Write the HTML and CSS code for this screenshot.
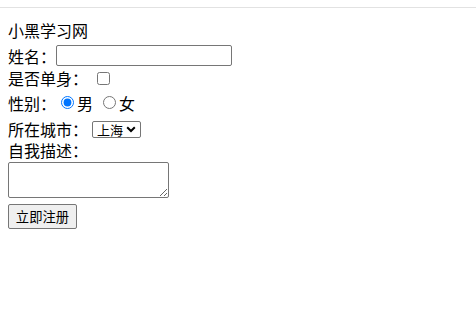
FILE: index.html
```html
<!DOCTYPE html>
<html lang="zh-CN">
<head>
<meta charset="utf-8">
<title>小黑学习网</title>
<link rel="stylesheet" href="styles.css">
</head>
<body>
<div class="topbar"></div>
<form class="form">
  <div class="row title">小黑学习网</div>
  <div class="row row-name">姓名：<input class="text-input" type="text"></div>
  <div class="row row-single">是否单身：<input class="check" type="checkbox"></div>
  <div class="row row-gender">性别：<input class="radio" type="radio" name="g" checked><span class="opt">男</span><input class="radio radio2" type="radio" name="g"><span class="opt">女</span></div>
  <div class="row row-city">所在城市：<select class="city"><option>上海</option></select></div>
  <div class="row row-desc">自我描述：</div>
  <textarea class="desc"></textarea>
  <button class="submit" type="button">立即注册</button>
</form>
</body>
</html>
```

FILE: styles.css
```css
html, body {
  margin: 0;
  padding: 0;
  background: #ffffff;
}
body {
  font-family: "Noto Sans CJK SC", "Noto Sans", sans-serif;
  font-size: 16px;
  color: #000000;
}
.topbar {
  height: 7px;
  border-bottom: 1px solid #e2e2e2;
}
.form {
  display: flex;
  flex-direction: column;
  align-items: flex-start;
  padding: 11px 8px 0 8px;
}
.row {
  display: flex;
  align-items: center;
  white-space: nowrap;
  line-height: 20px;
}
.title { height: 22px; }
.row-name { height: 23px; margin-top: 3px; }
.row-single { height: 22px; }
.row-gender { height: 23px; margin-top: 2px; }
.row-city { height: 22px; margin-top: 4px; line-height: 18px; }
.row-desc { height: 19px; line-height: 18px; }
.text-input {
  box-sizing: border-box;
  width: 176px;
  height: 21px;
  margin: 0;
  padding: 1px 2px;
  border: 1px solid #767676;
  border-radius: 2px;
  font-size: 13.33px;
}
.check {
  width: 13px;
  height: 13px;
  margin: 0 0 0 9px;
}
.radio {
  width: 13px;
  height: 13px;
  margin: 0 3px 0 5px;
}
.radio2 {
  margin-left: 10px;
}
.city {
  -webkit-appearance: none;
  appearance: none;
  box-sizing: border-box;
  height: 17px;
  width: 49px;
  margin: 0 0 0 4px;
  padding: 0 0 0 4px;
  font-family: "Noto Sans CJK SC", sans-serif;
  font-size: 13px;
  line-height: 15px;
  border: 1px solid #767676;
  border-radius: 2px;
  color: #000000;
  background: #ffffff url("data:image/svg+xml,%3Csvg xmlns='http://www.w3.org/2000/svg' width='10' height='7' viewBox='0 0 10 7'%3E%3Cpath d='M1.2 1.3 L5 5 L8.8 1.3' fill='none' stroke='%23000' stroke-width='2'/%3E%3C/svg%3E") no-repeat right 4px center;
}
.desc {
  box-sizing: border-box;
  width: 161px;
  height: 36px;
  margin: 3px 0 0 0;
  border: 1px solid #767676;
  border-radius: 2px;
  padding: 2px;
}
.submit {
  box-sizing: border-box;
  width: 69px;
  height: 25px;
  margin-top: 6px;
  padding: 1px 6px;
  font-family: "Noto Sans CJK SC", sans-serif;
  font-size: 13.33px;
  color: #000000;
  background: #efefef;
  border: 1px solid #767676;
  border-radius: 2px;
}
```
